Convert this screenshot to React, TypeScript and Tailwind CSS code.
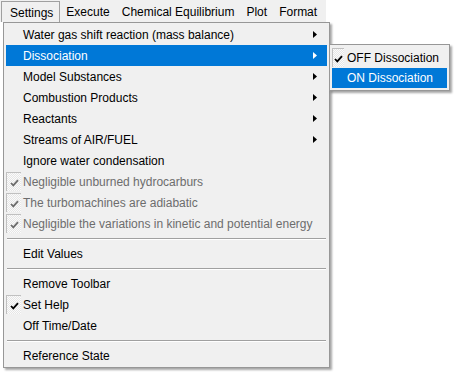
import * as React from "react";

type Item =
  | { kind: "sep" }
  | {
      kind: "item";
      label: string;
      submenu?: boolean;
      checked?: boolean;
      disabled?: boolean;
      active?: boolean;
    };

const items: Item[] = [
  { kind: "item", label: "Water gas shift reaction (mass balance)", submenu: true },
  { kind: "item", label: "Dissociation", submenu: true, active: true },
  { kind: "item", label: "Model Substances", submenu: true },
  { kind: "item", label: "Combustion Products", submenu: true },
  { kind: "item", label: "Reactants", submenu: true },
  { kind: "item", label: "Streams of AIR/FUEL", submenu: true },
  { kind: "item", label: "Ignore water condensation" },
  { kind: "item", label: "Negligible unburned hydrocarburs", checked: true, disabled: true },
  { kind: "item", label: "The turbomachines are adiabatic", checked: true, disabled: true },
  {
    kind: "item",
    label: "Negligible the variations in kinetic and potential energy",
    checked: true,
    disabled: true,
  },
  { kind: "sep" },
  { kind: "item", label: "Edit Values" },
  { kind: "sep" },
  { kind: "item", label: "Remove Toolbar" },
  { kind: "item", label: "Set Help", checked: true },
  { kind: "item", label: "Off Time/Date" },
  { kind: "sep" },
  { kind: "item", label: "Reference State" },
];

const menuBar = ["Settings", "Execute", "Chemical Equilibrium", "Plot", "Format"];

function CheckBox({ disabled, narrow }: { disabled?: boolean; narrow?: boolean }) {
  return (
    <span
      className={
        "absolute left-0 top-[1px] flex h-[19px] items-center justify-center border-l border-t border-[#c0c0c0] bg-[repeating-conic-gradient(#e6e6e6_0%_25%,#fbfbfb_0%_50%)] bg-[length:2px_2px] " +
        (narrow ? "w-[12px]" : "w-[15px]")
      }
    >
      <svg width="9" height="8" viewBox="0 0 9 8" className="mt-[1px]">
        <path
          d="M1 4 L3.3 6.4 L8 1.2"
          fill="none"
          stroke={disabled ? "#6d6d6d" : "#000"}
          strokeWidth="1.8"
        />
      </svg>
    </span>
  );
}

function Arrow({ color }: { color: string }) {
  return (
    <svg width="4" height="7" viewBox="0 0 4 7" className="absolute right-[10px] top-[7px]">
      <path d="M0 0 L4 3.5 L0 7 Z" fill={color} />
    </svg>
  );
}

export default function App() {
  return (
    <div className="relative h-[373px] w-[456px] overflow-hidden bg-white text-[12px] text-black [font-family:'Liberation_Sans',Arial,sans-serif]">
      {/* menu bar */}
      <div className="flex h-[22px] w-[326px] items-end bg-[#f0f0f0] pt-[1px]">
        {menuBar.map((m, i) => (
          <div
            key={m}
            className={
              i === 0
                ? "ml-[1px] flex h-[21px] items-center whitespace-nowrap border border-b-0 border-[#a0a0a0] pl-[8px] pr-[6px] pt-[1px]"
                : "flex h-[21px] items-center whitespace-nowrap px-[6px] pt-[1px]"
            }
          >
            {m}
          </div>
        ))}
      </div>

      {/* dropdown */}
      <div className="absolute left-[3px] top-[22px] w-[327px] border border-[#979797] bg-[#f0f0f0] py-[1px] shadow-[2px_2px_2px_rgba(0,0,0,0.35)]">
        {items.map((it, i) =>
          it.kind === "sep" ? (
            <div key={i} className="flex h-[9px] items-center px-[3px]">
              <div className="h-[2px] w-full border-t border-[#a0a0a0] border-b border-b-white" />
            </div>
          ) : (
            <div
              key={i}
              className={
                "relative mx-[2px] flex h-[21px] items-center pl-[17px] " +
                (it.active ? "bg-[#0078d7] text-white" : it.disabled ? "text-[#6d6d6d]" : "")
              }
            >
              {it.checked && <CheckBox disabled={it.disabled} />}
              <span className="whitespace-nowrap">{it.label}</span>
              {it.submenu && <Arrow color={it.active ? "#fff" : "#000"} />}
            </div>
          )
        )}
      </div>

      {/* submenu */}
      <div className="absolute left-[329px] top-[44px] w-[121px] border border-[#979797] bg-[#f0f0f0] py-[2px] shadow-[2px_2px_2px_rgba(0,0,0,0.35)]">
        <div className="relative mx-[2px] flex h-[21px] items-center pl-[15px]">
          <CheckBox narrow />
          <span className="whitespace-nowrap">OFF Dissociation</span>
        </div>
        <div className="relative mx-[2px] flex h-[20px] items-center bg-[#0078d7] pl-[15px] text-white">
          <span className="whitespace-nowrap">ON Dissociation</span>
        </div>
      </div>
    </div>
  );
}
